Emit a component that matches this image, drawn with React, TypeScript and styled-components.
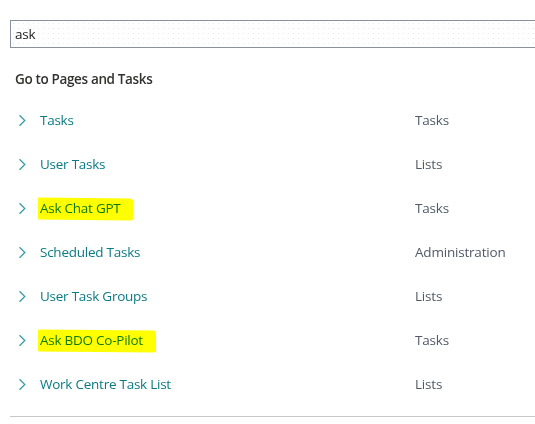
import React from "react";
import styled, { createGlobalStyle } from "styled-components";

const GlobalStyle = createGlobalStyle`
  html, body {
    margin: 0;
    padding: 0;
    background: #fff;
    overflow: hidden;
  }
  body {
    font-family: "Open Sans", "Noto Sans", "Liberation Sans", sans-serif;
  }
`;

const Page = styled.div`
  width: 535px;
  height: 424px;
  padding: 20px 0 0 10px;
  box-sizing: border-box;
  overflow: hidden;
`;

const SearchBox = styled.div`
  width: 560px;
  height: 28px;
  box-sizing: border-box;
  border: 1px solid #8a909c;
  display: flex;
  align-items: center;
  padding-left: 4px;
  font-size: 13.5px;
  letter-spacing: -0.2px;
  color: #212121;
  background-color: #fff;
  background-image: radial-gradient(#e8e8e8 0.7px, transparent 0.8px);
  background-size: 5px 5px;
`;

const Heading = styled.div`
  margin-top: 21px;
  padding-left: 5px;
  height: 20px;
  line-height: 20px;
  font-size: 13.5px;
  font-weight: 600;
  letter-spacing: -0.35px;
  color: #323130;
`;

const List = styled.div`
  margin-top: 9px;
  display: flex;
  flex-direction: column;
`;

const Row = styled.div`
  height: 44px;
  display: grid;
  grid-template-columns: 30px 375px 1fr;
  align-items: center;
`;

const Chevron = styled.svg`
  width: 8px;
  height: 13px;
  margin-left: 8px;
`;

const Name = styled.span`
  position: relative;
  justify-self: start;
  font-size: 13.5px;
  letter-spacing: -0.25px;
  color: #0b7a82;
`;

const Mark = styled.span<{ $w: number }>`
  position: absolute;
  left: -2px;
  top: -1px;
  bottom: -3px;
  width: ${(p) => p.$w}px;
  background: #ffff00;
  mix-blend-mode: multiply;
  border-radius: 1px 3px 2px 1px;
  transform: skewY(0.6deg);
`;

const Category = styled.span`
  font-size: 13.5px;
  letter-spacing: -0.2px;
  color: #505a66;
`;

const Divider = styled.div`
  margin-top: 10px;
  height: 1px;
  background: #c8c8c8;
`;

const rows: { name: string; cat: string; mark?: number }[] = [
  { name: "Tasks", cat: "Tasks" },
  { name: "User Tasks", cat: "Lists" },
  { name: "Ask Chat GPT", cat: "Tasks", mark: 95 },
  { name: "Scheduled Tasks", cat: "Administration" },
  { name: "User Task Groups", cat: "Lists" },
  { name: "Ask BDO Co-Pilot", cat: "Tasks", mark: 118 },
  { name: "Work Centre Task List", cat: "Lists" },
];

const ChevronIcon = () => (
  <Chevron viewBox="0 0 8 13">
    <path d="M1.5 1.2 L6.8 6.5 L1.5 11.8" fill="none" stroke="#3a9ea6" strokeWidth="1.3" />
  </Chevron>
);

export default function App() {
  return (
    <Page>
      <GlobalStyle />
      <SearchBox>ask</SearchBox>
      <Heading>Go to Pages and Tasks</Heading>
      <List>
        {rows.map((r) => (
          <Row key={r.name}>
            <ChevronIcon />
            <Name>
              {r.name}
              {r.mark && <Mark $w={r.mark} />}
            </Name>
            <Category>{r.cat}</Category>
          </Row>
        ))}
      </List>
      <Divider />
    </Page>
  );
}
